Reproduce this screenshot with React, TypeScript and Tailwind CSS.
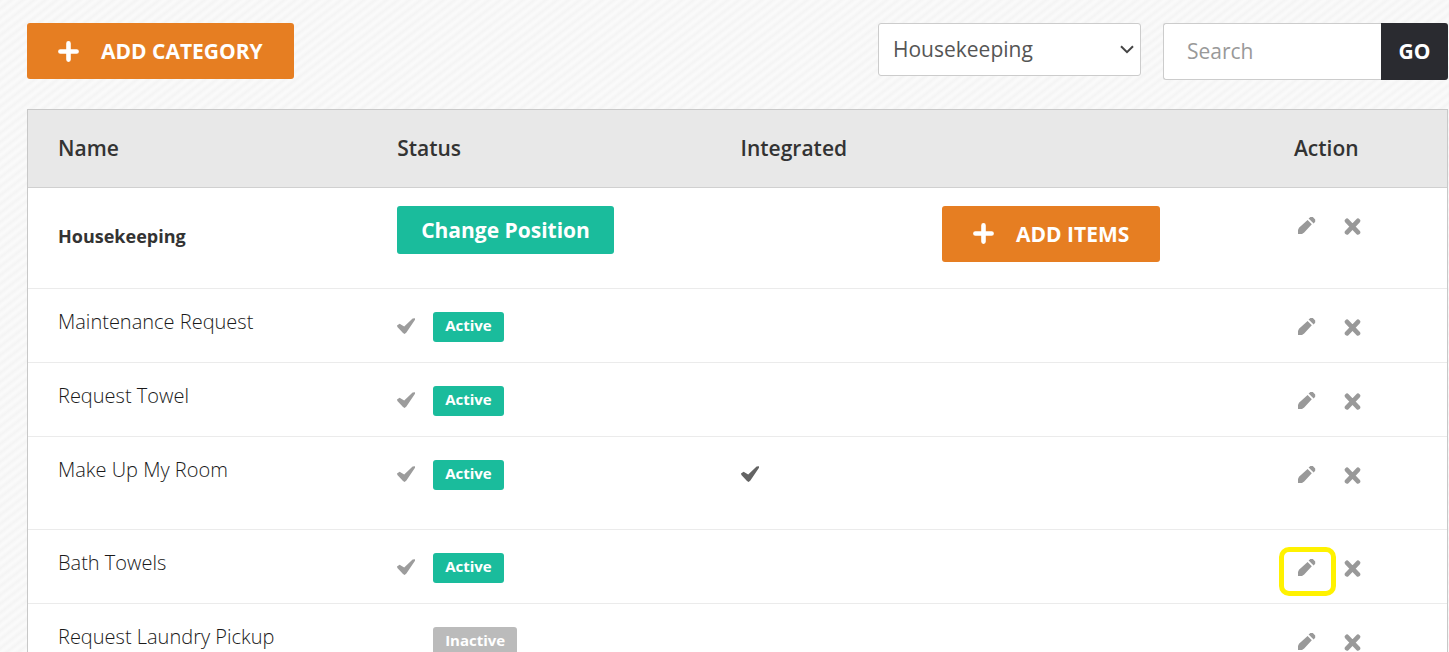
import clsx from "clsx";

interface Item {
  name: string;
  active: boolean;
  integrated?: boolean;
  highlighted?: boolean;
}

const items: Item[] = [
  { name: "Maintenance Request", active: true },
  { name: "Request Towel", active: true },
  { name: "Make Up My Room", active: true, integrated: true },
  { name: "Bath Towels", active: true, highlighted: true },
  { name: "Request Laundry Pickup", active: false },
];

const PlusIcon = () => (
  <svg width="21" height="21" viewBox="0 0 21 21" aria-hidden="true">
    <path
      d="M10.5 2.4v16.2M2.4 10.5h16.2"
      stroke="currentColor"
      strokeWidth="4.6"
      strokeLinecap="round"
    />
  </svg>
);

const CheckIcon = ({ dark }: { dark?: boolean }) => (
  <svg
    width="18"
    height="16"
    viewBox="0 0 18 16"
    className={clsx("shrink-0", dark ? "text-[#636363]" : "text-[#9c9c9c]")}
    aria-hidden="true"
  >
    <path
      d="M0 7.4 2.6 5.8 7.2 8.6 15.6.4 18 .2v1.6L9.4 14.6 7.6 15.9 6 15 .4 9Z"
      fill="currentColor"
    />
  </svg>
);

const PencilIcon = () => (
  <svg width="18" height="18" viewBox="0 0 18 18" aria-hidden="true">
    <path
      d="M0 17v-4L1 10.8 9.6 3l4.2 4.2L6.2 15.4 4 17ZM10.6 1.6 12.4 0h2.4L17.2 2.4v2.4L15.6 6.6Z"
      fill="currentColor"
    />
  </svg>
);

const CrossIcon = () => (
  <svg width="18" height="18" viewBox="0 0 18 18" aria-hidden="true">
    <path
      d="M3 3.8 14 15.4M14 3.8 3 15.4"
      stroke="currentColor"
      strokeWidth="4.6"
      strokeLinecap="round"
    />
  </svg>
);

const AddButton = ({ label }: { label: string }) => (
  <button
    type="button"
    className="flex h-14 items-center gap-[22px] whitespace-nowrap rounded-[3px] bg-[#e67e22] px-[31px] text-[21px] leading-[30px] font-bold text-white"
  >
    <PlusIcon />
    {label}
  </button>
);

const RowActions = ({
  name,
  highlighted,
}: {
  name: string;
  highlighted?: boolean;
}) => (
  <div className="flex gap-7 pl-1 pt-[11px] text-[#999]">
    <button type="button" aria-label={`Edit ${name}`} className="relative">
      <PencilIcon />
      {highlighted && (
        <span className="absolute -left-[19px] -top-3 h-[49px] w-[57px] rounded-[10px] border-5 border-[#fff200]" />
      )}
    </button>
    <button type="button" aria-label={`Delete ${name}`}>
      <CrossIcon />
    </button>
  </div>
);

const Toolbar = () => (
  <header className="flex items-start justify-between">
    <AddButton label="ADD CATEGORY" />
    <form className="flex items-start gap-[22px]">
      <div className="relative">
        <select
          aria-label="Category"
          className="h-[53px] w-[263px] appearance-none rounded-[3px] border border-[#ccc] bg-white px-[14px] text-[21px] text-[#555]"
        >
          <option>Housekeeping</option>
        </select>
        <svg
          width="14"
          height="9"
          viewBox="0 0 14 9"
          className="pointer-events-none absolute right-[7px] top-[22px] text-[#444]"
          aria-hidden="true"
        >
          <path
            d="M1 1.2 7 7.2 13 1.2"
            fill="none"
            stroke="currentColor"
            strokeWidth="2"
          />
        </svg>
      </div>
      <div className="flex h-[57px]">
        <input
          type="text"
          aria-label="Search"
          placeholder="Search"
          className="w-[218px] rounded-l-[3px] border border-r-0 border-[#ccc] bg-white px-[23px] text-[21px] text-[#555] placeholder:text-[#999]"
        />
        <button
          type="submit"
          className="w-[67px] rounded-r-[3px] bg-[#2a2b30] text-[21px] font-bold text-white"
        >
          GO
        </button>
      </div>
    </form>
  </header>
);

const App = () => {
  return (
    <main className="h-screen overflow-hidden bg-[#f7f7f7] bg-[repeating-linear-gradient(142deg,#f4f4f4_0px,#fafafa_3px,#fafafa_4px,#f4f4f4_7px)] pl-[27px] pr-px pt-[23px] font-['Open_Sans',sans-serif] text-[#333]">
      <Toolbar />
      <div className="mt-[29px] border border-[#c8c8c8] bg-white">
        <table className="w-full table-fixed text-left text-xl leading-[30px]">
          <thead>
            <tr className="h-[77px] border-b border-[#d0d0d0] bg-[#e8e8e8] text-[21px]">
              <th className="w-[23.9%] pl-[30px] font-semibold">Name</th>
              <th className="w-[24.2%] pl-[30px] font-semibold">Status</th>
              <th className="w-[14.2%] pl-[30px] font-semibold">Integrated</th>
              <td className="w-[24.8%]"></td>
              <th className="pl-[30px] font-semibold">Action</th>
            </tr>
          </thead>
          <tbody className="font-light text-[#1a1a1a] [&_td]:pl-[30px] [&_td]:pt-[18px] [&_td]:align-top">
            <tr className="h-[101px] border-b border-[#ebebeb]">
              <td>
                <h4 className="mt-[15px] text-lg font-bold leading-[30px] text-[#333]">
                  Housekeeping
                </h4>
              </td>
              <td>
                <button
                  type="button"
                  className="h-12 rounded-[3px] bg-[#1abc9c] px-6 text-[21px] font-bold text-white"
                >
                  Change Position
                </button>
              </td>
              <td></td>
              <td>
                <AddButton label="ADD ITEMS" />
              </td>
              <td>
                <RowActions name="Housekeeping" />
              </td>
            </tr>
            {items.map((item) => (
              <tr
                key={item.name}
                className={clsx(
                  "border-b border-[#ebebeb]",
                  item.integrated ? "h-[93px]" : "h-[74px]"
                )}
              >
                <td>{item.name}</td>
                <td>
                  <div className="flex items-start gap-[18px] pt-[5px]">
                    <span className="w-[18px] pt-[6px]">
                      {item.active && <CheckIcon />}
                    </span>
                    <span
                      className={clsx(
                        "h-[30px] rounded-[3px] px-3 text-[15px] font-bold leading-[26px] text-white",
                        item.active ? "bg-[#1abc9c]" : "bg-[#bbb]"
                      )}
                    >
                      {item.active ? "Active" : "Inactive"}
                    </span>
                  </div>
                </td>
                <td>
                  {item.integrated && (
                    <div className="pt-[11px]">
                      <CheckIcon dark />
                    </div>
                  )}
                </td>
                <td></td>
                <td>
                  <RowActions
                    name={item.name}
                    highlighted={item.highlighted}
                  />
                </td>
              </tr>
            ))}
          </tbody>
        </table>
      </div>
    </main>
  );
};

export default App;
